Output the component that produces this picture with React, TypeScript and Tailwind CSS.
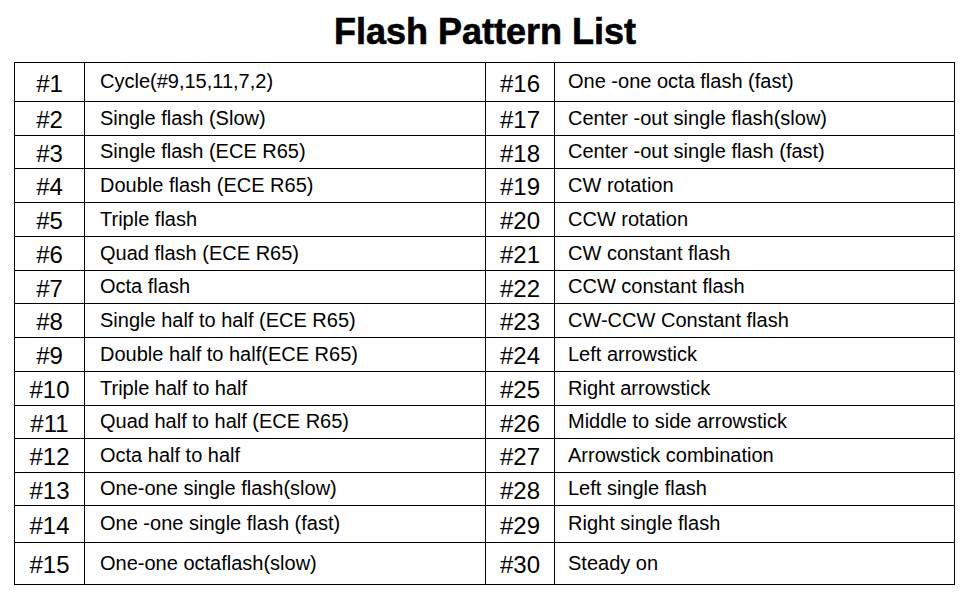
import React from 'react';

type Row = { h: string; a: string; aText: string; b: string; bText: string };

// row heights include the bottom rule
const rows: Row[] = [
  { h: 'h-[39px]', a: '#1', aText: 'Cycle(#9,15,11,7,2)', b: '#16', bText: 'One -one octa flash (fast)' },
  { h: 'h-[34px]', a: '#2', aText: 'Single flash (Slow)', b: '#17', bText: 'Center -out single flash(slow)' },
  { h: 'h-[33px]', a: '#3', aText: 'Single flash (ECE R65)', b: '#18', bText: 'Center -out single flash (fast)' },
  { h: 'h-[34px]', a: '#4', aText: 'Double flash (ECE R65)', b: '#19', bText: 'CW rotation' },
  { h: 'h-[34px]', a: '#5', aText: 'Triple flash', b: '#20', bText: 'CCW rotation' },
  { h: 'h-[34px]', a: '#6', aText: 'Quad flash (ECE R65)', b: '#21', bText: 'CW constant flash' },
  { h: 'h-[33px]', a: '#7', aText: 'Octa flash', b: '#22', bText: 'CCW constant flash' },
  { h: 'h-[34px]', a: '#8', aText: 'Single half to half (ECE R65)', b: '#23', bText: 'CW-CCW Constant flash' },
  { h: 'h-[34px]', a: '#9', aText: 'Double half to half(ECE R65)', b: '#24', bText: 'Left arrowstick' },
  { h: 'h-[34px]', a: '#10', aText: 'Triple half to half', b: '#25', bText: 'Right arrowstick' },
  { h: 'h-[33px]', a: '#11', aText: 'Quad half to half (ECE R65)', b: '#26', bText: 'Middle to side arrowstick' },
  { h: 'h-[34px]', a: '#12', aText: 'Octa half to half', b: '#27', bText: 'Arrowstick combination' },
  { h: 'h-[33px]', a: '#13', aText: 'One-one single flash(slow)', b: '#28', bText: 'Left single flash' },
  { h: 'h-[37px]', a: '#14', aText: 'One -one single flash (fast)', b: '#29', bText: 'Right single flash' },
  { h: 'h-[41px]', a: '#15', aText: 'One-one octaflash(slow)', b: '#30', bText: 'Steady on' },
];

const numCls = 'flex items-center justify-center pt-[3px] text-[24px] leading-none border-r border-black';
const txtCls = 'flex items-center pb-[2px] text-[20px] leading-none';

export default function App() {
  return (
    <div className="w-[970px] h-[600px] bg-white text-black font-['Liberation_Sans',Arial,sans-serif]">
      <h1 className="pt-[14px] text-center text-[36px] leading-[36px] font-bold [-webkit-text-stroke:0.6px_black]">
        Flash Pattern List
      </h1>
      <div className="ml-[14px] mt-[12px] w-[941px] border border-black">
        {rows.map((r, i) => (
          <div
            key={r.a}
            className={`flex ${r.h} ${i < rows.length - 1 ? 'border-b border-black' : ''}`}
          >
            <div className={`w-[70px] ${numCls}`}>{r.a}</div>
            <div className={`w-[401px] pl-[15px] border-r border-black ${txtCls}`}>{r.aText}</div>
            <div className={`w-[69px] ${numCls}`}>{r.b}</div>
            <div className={`flex-1 pl-[13px] ${txtCls}`}>{r.bText}</div>
          </div>
        ))}
      </div>
    </div>
  );
}
